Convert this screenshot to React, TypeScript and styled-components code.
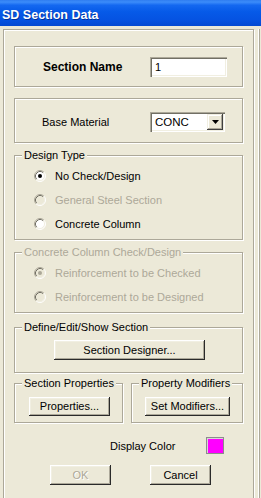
import React from "react";
import styled, { createGlobalStyle } from "styled-components";

const GlobalStyle = createGlobalStyle`
  html, body { margin: 0; padding: 0; background: #ECE9D8; }
  body { font-family: "Liberation Sans", Arial, sans-serif; font-size: 11px; color: #000; }
  * { box-sizing: border-box; }
`;

const Window = styled.div`
  width: 261px;
  height: 498px;
  overflow: hidden;
  background: #ECE9D8;
  display: flex;
  flex-direction: column;
`;

const TitleBar = styled.div`
  height: 26px;
  flex-shrink: 0;
  padding: 5px 0 0 2px;
  line-height: 21px;
  font-size: 12.5px;
  font-weight: bold;
  color: #fff;
  text-shadow: 1px 1px 0 rgba(0, 20, 90, 0.55);
  background: linear-gradient(
    to bottom,
    #2F7DF0 0%,
    #3C8CFA 8%,
    #1468F0 20%,
    #065AE8 45%,
    #0553E2 75%,
    #0449D2 100%
  );
`;

const Client = styled.div`
  flex: 1;
  display: flex;
  padding: 3px 0 0 3px;
`;

const RightEdge = styled.div`
  margin-left: 4px;
  width: 2px;
  border-left: 1px solid #fff;
  border-right: 1px solid #ACA899;
`;

const Frame = styled.div`
  width: 251px;
  flex-shrink: 0;
  height: 520px;
  border: 1px solid #ACA899;
  box-shadow: inset 1px 1px 0 #fff, 1px 1px 0 #fff;
  padding: 16px 10px 0 10px;
  display: flex;
  flex-direction: column;
`;

const GroupBox = styled.div<{ $top: number; $height: number }>`
  position: relative;
  margin-top: ${(p) => p.$top}px;
  height: ${(p) => p.$height}px;
  border: 1px solid #ACA899;
  box-shadow: inset 1px 1px 0 #fff, 1px 1px 0 #fff;
`;

const Legend = styled.span<{ $disabled?: boolean }>`
  position: absolute;
  top: -7px;
  left: 7px;
  padding: 0 2px;
  line-height: 13px;
  background: #ECE9D8;
  color: ${(p) => (p.$disabled ? "#ACA899" : "#000")};
  white-space: nowrap;
`;

const FieldRow = styled.div<{ $pad: number; $col: number; $pt: number }>`
  display: grid;
  grid-template-columns: ${(p) => p.$col}px auto;
  align-items: center;
  height: 100%;
  padding: ${(p) => p.$pt}px 0 0 ${(p) => p.$pad}px;
`;

const BoldLabel = styled.span`
  font-size: 12px;
  font-weight: bold;
`;

const Label = styled.span`
  white-space: nowrap;
`;

const Sunken = styled.div<{ $w: number }>`
  width: ${(p) => p.$w}px;
  height: 20px;
  background: #fff;
  box-shadow: inset 1px 1px 0 #ACA899, inset 2px 2px 0 #716F64, inset -1px -1px 0 #fff,
    inset -2px -2px 0 #F1EFE2;
  display: flex;
  align-items: center;
  padding: 0 2px 0 5px;
  line-height: 14px;
`;

const ComboText = styled.span`
  flex: 1;
  font-size: 11.5px;
`;

const DropButton = styled.div`
  width: 16px;
  height: 16px;
  background: #ECE9D8;
  box-shadow: inset -1px -1px 0 #404040, inset 1px 1px 0 #F1EFE2, inset -2px -2px 0 #ACA899,
    inset 2px 2px 0 #fff;
  display: flex;
  align-items: center;
  justify-content: center;
`;

const RadioList = styled.div`
  padding: 8px 0 0 19px;
  display: flex;
  flex-direction: column;
`;

const RadioRow = styled.div<{ $disabled?: boolean }>`
  height: 24px;
  display: flex;
  align-items: center;
  gap: 9px;
  color: ${(p) => (p.$disabled ? "#ACA899" : "#000")};
  white-space: nowrap;
`;

const Button = styled.div<{ $w: number; $h?: number; $disabled?: boolean }>`
  width: ${(p) => p.$w}px;
  height: ${(p) => p.$h ?? 20}px;
  background: #ECE9D8;
  box-shadow: inset -1px -1px 0 #2a2a2a, inset 1px 1px 0 #fff, inset -2px -2px 0 #ACA899,
    inset 2px 2px 0 #F1EFE2;
  display: flex;
  align-items: center;
  justify-content: center;
  padding-bottom: 1px;
  color: ${(p) => (p.$disabled ? "#ACA899" : "#000")};
  text-shadow: ${(p) => (p.$disabled ? "1px 1px 0 #fff" : "none")};
  white-space: nowrap;
`;

const InnerPad = styled.div<{ $pt: number; $pl: number }>`
  padding: ${(p) => p.$pt}px 0 0 ${(p) => p.$pl}px;
`;

const PairRow = styled.div`
  margin-top: 10px;
  display: grid;
  grid-template-columns: 109px 112px;
  column-gap: 8px;
`;

const ColorRow = styled.div`
  margin-top: 14px;
  height: 17px;
  display: grid;
  grid-template-columns: 96px 96px 18px;
  align-items: center;
`;

const Swatch = styled.div`
  width: 18px;
  height: 17px;
  background: #FF00FF;
  border: 1px solid #8C8C8C;
  box-shadow: inset 1px 1px 0 #D8D8D8;
`;

const ButtonRow = styled.div`
  margin-top: 11px;
  padding-left: 36px;
  display: flex;
  gap: 39px;
`;

const Radio = ({ checked, disabled }: { checked?: boolean; disabled?: boolean }) => (
  <svg width="12" height="12" viewBox="0 0 12 12" style={{ flexShrink: 0 }}>
    <circle cx="6" cy="6" r="5" fill={disabled ? "#ECE9D8" : "#fff"} />
    <path d="M2.11 9.89 A5.5 5.5 0 0 1 9.89 2.11" stroke="#ACA899" fill="none" />
    <path d="M2.82 9.18 A4.5 4.5 0 0 1 9.18 2.82" stroke="#716F64" fill="none" />
    <path d="M9.89 2.11 A5.5 5.5 0 0 1 2.11 9.89" stroke="#fff" fill="none" />
    <path d="M9.18 2.82 A4.5 4.5 0 0 1 2.82 9.18" stroke="#F1EFE2" fill="none" />
    {checked && <circle cx="6" cy="6" r="2" fill={disabled ? "#ACA899" : "#000"} />}
  </svg>
);

const Arrow = () => (
  <svg width="7" height="4" viewBox="0 0 7 4">
    <path d="M0 0 H7 L3.5 4 Z" fill="#000" />
  </svg>
);

export default function App() {
  return (
    <>
      <GlobalStyle />
      <Window>
        <TitleBar>SD Section Data</TitleBar>
        <Client>
          <Frame>
            <GroupBox $top={0} $height={41}>
              <FieldRow $pad={28} $col={107} $pt={0}>
                <BoldLabel>Section Name</BoldLabel>
                <Sunken $w={77}>1</Sunken>
              </FieldRow>
            </GroupBox>

            <GroupBox $top={11} $height={45}>
              <FieldRow $pad={27} $col={108} $pt={2}>
                <Label>Base Material</Label>
                <Sunken $w={75}>
                  <ComboText>CONC</ComboText>
                  <DropButton>
                    <Arrow />
                  </DropButton>
                </Sunken>
              </FieldRow>
            </GroupBox>

            <GroupBox $top={12} $height={85}>
              <Legend>Design Type</Legend>
              <RadioList>
                <RadioRow>
                  <Radio checked />
                  No Check/Design
                </RadioRow>
                <RadioRow $disabled>
                  <Radio disabled />
                  General Steel Section
                </RadioRow>
                <RadioRow>
                  <Radio />
                  Concrete Column
                </RadioRow>
              </RadioList>
            </GroupBox>

            <GroupBox $top={12} $height={61}>
              <Legend $disabled>Concrete Column Check/Design</Legend>
              <RadioList>
                <RadioRow $disabled>
                  <Radio checked disabled />
                  Reinforcement to be Checked
                </RadioRow>
                <RadioRow $disabled>
                  <Radio disabled />
                  Reinforcement to be Designed
                </RadioRow>
              </RadioList>
            </GroupBox>

            <GroupBox $top={14} $height={46}>
              <Legend>Define/Edit/Show Section</Legend>
              <InnerPad $pt={12} $pl={39}>
                <Button $w={151}>Section Designer...</Button>
              </InnerPad>
            </GroupBox>

            <PairRow>
              <GroupBox $top={0} $height={40}>
                <Legend>Section Properties</Legend>
                <InnerPad $pt={13} $pl={14}>
                  <Button $w={81} $h={19}>Properties...</Button>
                </InnerPad>
              </GroupBox>
              <GroupBox $top={0} $height={40}>
                <Legend>Property Modifiers</Legend>
                <InnerPad $pt={13} $pl={13}>
                  <Button $w={85} $h={19}>Set Modifiers...</Button>
                </InnerPad>
              </GroupBox>
            </PairRow>

            <ColorRow>
              <span />
              <Label>Display Color</Label>
              <Swatch />
            </ColorRow>

            <ButtonRow>
              <Button $w={61} $disabled>OK</Button>
              <Button $w={61}>Cancel</Button>
            </ButtonRow>
          </Frame>
          <RightEdge />
        </Client>
      </Window>
    </>
  );
}
